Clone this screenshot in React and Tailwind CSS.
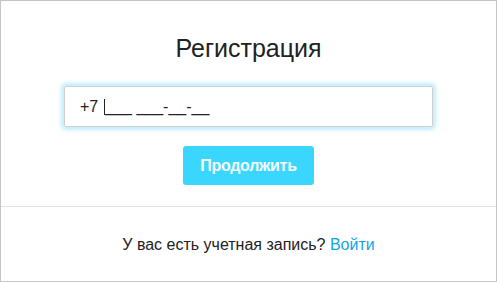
export default function App() {
  return (
    <div className="h-[282px] w-[497px] border border-[#c4c4c4] bg-white font-['Liberation_Sans',Arial,sans-serif]">
      <div className="flex h-[206px] flex-col items-center border-b border-[#e2e2e2]">
        <h1 className="mt-[32px] text-[25px] leading-[30px] text-[#222]">Регистрация</h1>
        <div className="mt-[23px] flex h-[41px] w-[369px] items-center rounded-[2px] border border-[#cfcfcf] px-[15px] text-[16px] text-[#222] shadow-[0_0_4px_3px_#bfedfd]">
          <span>+7</span>
          <span className="ml-[6px] h-[16px] w-px bg-[#222]" />
          <span>___ ___-__-__</span>
        </div>
        <button className="mt-[19px] h-[39px] w-[131px] rounded-[3px] bg-[#3bd6fe] text-[16px] font-bold tracking-[-0.3px] text-[#f4fcff]">
          Продолжить
        </button>
      </div>
      <div className="flex h-[74px] items-center justify-center pt-px text-[16px] text-[#222]">
        <span>
          У вас есть учетная запись? <a className="text-[#13a4e6]">Войти</a>
        </span>
      </div>
    </div>
  );
}
